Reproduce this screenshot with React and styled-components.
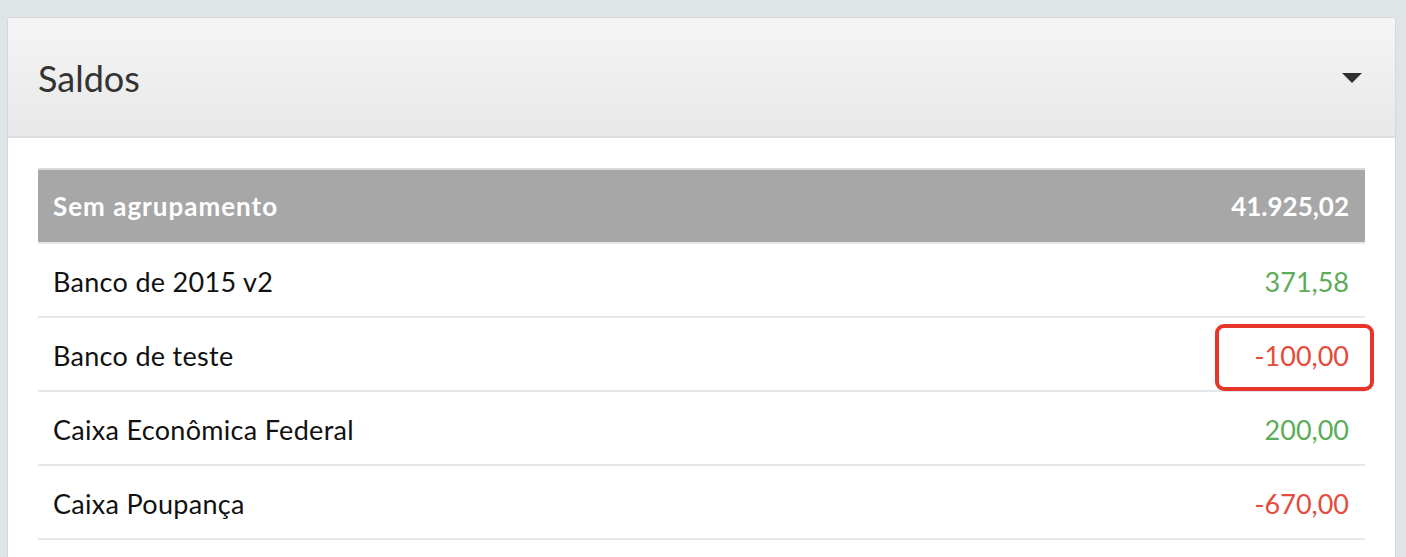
import React from 'react';
import styled, { createGlobalStyle } from 'styled-components';

const GlobalStyle = createGlobalStyle`
    html, body {
        margin: 0;
        padding: 0;
        background: #dfe4e7;
        font-family: Lato, "Noto Sans", sans-serif;
    }
`;

const Page = styled.div`
    padding: 17px 10px 0 7px;
    height: 557px;
    box-sizing: border-box;
    overflow: hidden;
`;

const Panel = styled.div`
    background: #fff;
    border: 1px solid #d3d8db;
    border-radius: 3px;
    min-height: 600px;
`;

const PanelHeader = styled.div`
    display: flex;
    align-items: center;
    justify-content: space-between;
    height: 118px;
    padding: 0 33px 0 30px;
    background: linear-gradient(to bottom, #f5f5f5, #e8e8e8);
    border-bottom: 2px solid #dcdcdc;
    border-radius: 3px 3px 0 0;
`;

const Title = styled.h3`
    margin: 0;
    font-size: 36px;
    font-weight: 400;
    color: #333;
    padding-top: 2px;
`;

const Caret = styled.span`
    width: 0;
    height: 0;
    border-left: 10px solid transparent;
    border-right: 10px solid transparent;
    border-top: 10px solid #2f2f2f;
    margin-top: 2px;
`;

const PanelBody = styled.div`
    padding: 30px 30px 0 30px;
`;

const Table = styled.div`
    display: flex;
    flex-direction: column;
`;

const GroupRow = styled.div`
    display: flex;
    align-items: center;
    justify-content: space-between;
    height: 72px;
    padding: 0 16px 0 15px;
    background: #a7a7a7;
    border-top: 2px solid #d9d9d9;
    border-bottom: 2px solid #e4e8ec;
    color: #fff;
    font-size: 26px;
    font-weight: 700;
`;

const GroupLabel = styled.span`
    letter-spacing: 1px;
`;

const Row = styled.div`
    position: relative;
    display: flex;
    align-items: center;
    justify-content: space-between;
    height: 70px;
    padding: 2px 16px 0 15px;
    border-bottom: 2px solid #e4e8ec;
    font-size: 27px;
    color: #111;
`;

const Name = styled.span`
    letter-spacing: 0.3px;
`;

const Amount = styled.span`
    color: ${props => (props.negative ? '#e44c3c' : '#5cac58')};
`;

const Highlight = styled.span`
    position: absolute;
    top: 6px;
    bottom: -1px;
    right: -9px;
    width: 159px;
    box-sizing: border-box;
    border: 4px solid #e8352a;
    border-radius: 9px;
    pointer-events: none;
`;

const accounts = [
    { name: 'Banco de 2015 v2', value: '371,58' },
    { name: 'Banco de teste', value: '-100,00', highlight: true },
    { name: 'Caixa Econômica Federal', value: '200,00' },
    { name: 'Caixa Poupança', value: '-670,00' },
];

export default function App() {
    return (
        <>
            <GlobalStyle />
            <Page>
                <Panel>
                    <PanelHeader>
                        <Title>Saldos</Title>
                        <Caret />
                    </PanelHeader>
                    <PanelBody>
                        <Table>
                            <GroupRow>
                                <GroupLabel>Sem agrupamento</GroupLabel>
                                <span>41.925,02</span>
                            </GroupRow>
                            {accounts.map(account => (
                                <Row key={account.name}>
                                    <Name>{account.name}</Name>
                                    <Amount negative={account.value.startsWith('-')}>{account.value}</Amount>
                                    {account.highlight && <Highlight />}
                                </Row>
                            ))}
                        </Table>
                    </PanelBody>
                </Panel>
            </Page>
        </>
    );
}
